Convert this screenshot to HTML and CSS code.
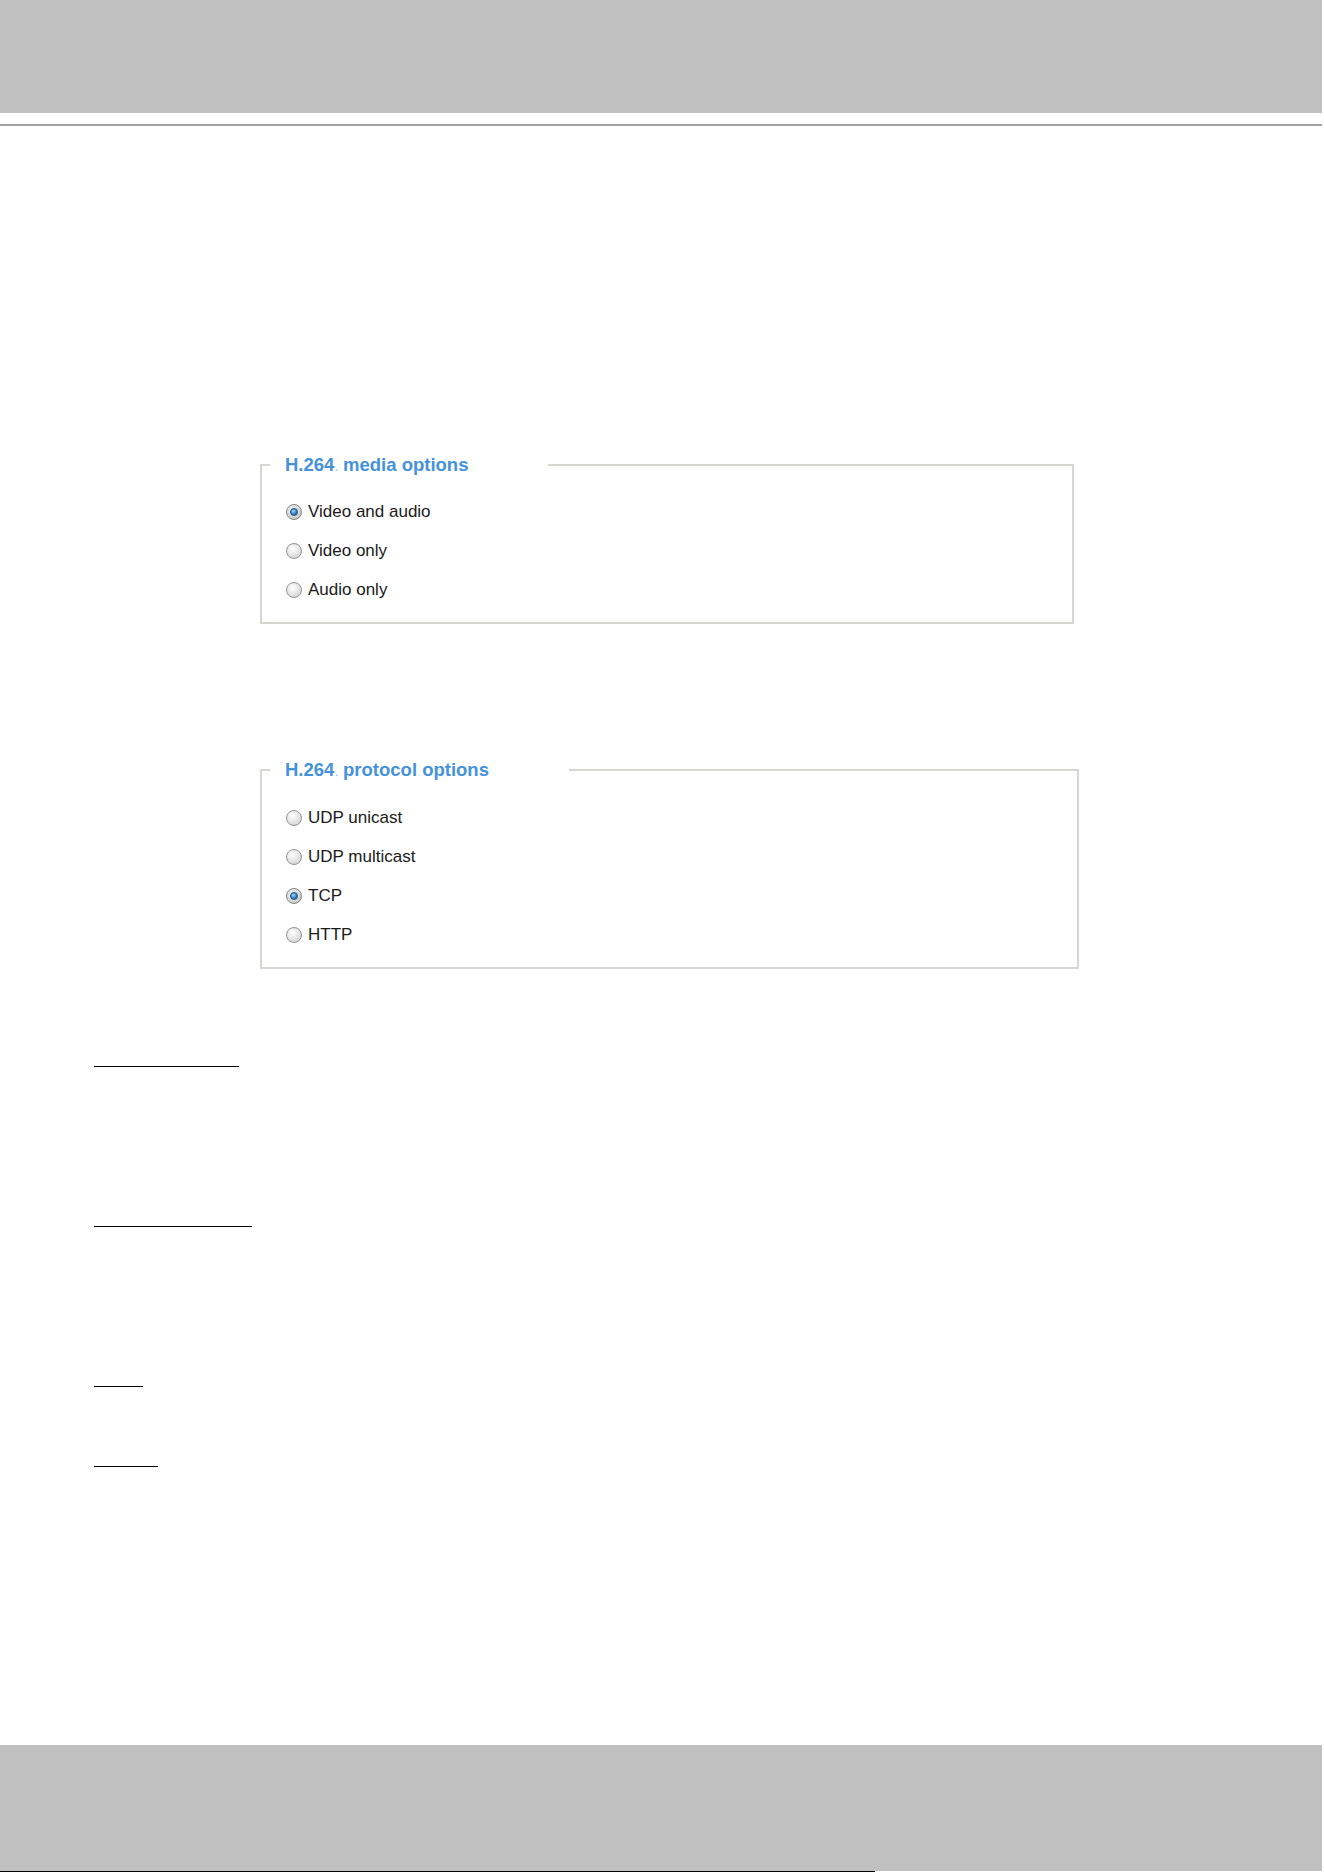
FILE: index.html
```html
<!DOCTYPE html>
<html lang="en">
<head>
<meta charset="utf-8">
<title>H.264 options</title>
<link rel="stylesheet" href="styles.css">
</head>
<body>
<div class="page">
  <header class="top-band"></header>
  <div class="top-rule"></div>

  <fieldset class="group group-media">
    <legend class="group-title">H.264<span class="tiny-dot">.</span> media options</legend>
    <div class="option"><span class="radio checked"></span><span class="label">Video and audio</span></div>
    <div class="option"><span class="radio"></span><span class="label">Video only</span></div>
    <div class="option"><span class="radio"></span><span class="label">Audio only</span></div>
  </fieldset>

  <fieldset class="group group-protocol">
    <legend class="group-title">H.264<span class="tiny-dot">.</span> protocol options</legend>
    <div class="option"><span class="radio"></span><span class="label">UDP unicast</span></div>
    <div class="option"><span class="radio"></span><span class="label">UDP multicast</span></div>
    <div class="option"><span class="radio checked"></span><span class="label">TCP</span></div>
    <div class="option"><span class="radio"></span><span class="label">HTTP</span></div>
  </fieldset>

  <section class="notes">
    <div class="rule-line w1"></div>
    <div class="rule-line w2 gap-long"></div>
    <div class="rule-line w3 gap-long"></div>
    <div class="rule-line w4 gap-short"></div>
  </section>

  <footer class="bottom-band"></footer>
  <div class="bottom-rule"></div>
</div>
</body>
</html>
```
FILE: styles.css
```css
html, body {
  margin: 0;
  padding: 0;
  background: #ffffff;
}

body {
  font-family: "Liberation Sans", Arial, sans-serif;
  color: #1e1e1e;
}

.page {
  width: 1324px;
  height: 1872px;
  overflow: hidden;
}

.top-band {
  width: 1322px;
  height: 113px;
  background: #bfc0bf;
}

.top-rule {
  width: 1322px;
  height: 2px;
  margin-top: 11px;
  background: #a2a2a2;
}

.group {
  box-sizing: border-box;
  margin: 0 0 0 260px;
  border: 2px solid #d8d6d0;
  padding: 16px 0 13px 8px;
  min-width: 0;
}

.group-media {
  width: 814px;
  margin-top: 328px;
}

.group-protocol {
  width: 819px;
  margin-top: 135px;
  padding-top: 17px;
}

.group-title {
  font-size: 18.5px;
  line-height: 22px;
  height: 22px;
  font-weight: bold;
  color: #4592dc;
  padding: 0 80px 0 15px;
  margin: 0;
  white-space: nowrap;
}

.tiny-dot {
  font-size: 9px;
  line-height: 0;
  color: #8fb3d6;
  margin-left: 1px;
}

.option {
  display: flex;
  align-items: center;
  height: 39px;
  padding-left: 16px;
  gap: 6px;
}

.label {
  font-size: 17px;
  line-height: 20px;
  color: #1a1a1a;
}

.radio {
  box-sizing: border-box;
  width: 16px;
  height: 16px;
  border-radius: 50%;
  border: 1px solid #959595;
  background: radial-gradient(circle at 40% 35%, #ffffff 0%, #e8e8e8 45%, #c8c8c8 100%);
  display: flex;
  align-items: center;
  justify-content: center;
  flex: none;
}

.radio.checked {
  border-color: #858585;
  background: radial-gradient(circle at 40% 35%, #f2f2f2 0%, #d8d8d8 55%, #b2b2b2 100%);
}

.radio.checked::after {
  content: "";
  box-sizing: border-box;
  width: 8px;
  height: 8px;
  border-radius: 50%;
  border: 1px solid #1f4e7a;
  background: radial-gradient(circle at 40% 35%, #a8dcff 0%, #3a8ad2 50%, #145592 100%);
}

.notes {
  padding-left: 94px;
  padding-top: 97px;
}

.rule-line {
  height: 1px;
  background: #000000;
}

.w1 { width: 145px; }
.w2 { width: 158px; }
.w3 { width: 49px; }
.w4 { width: 64px; }

.gap-long { margin-top: 159px; }
.gap-short { margin-top: 79px; }

.bottom-band {
  width: 1322px;
  height: 126px;
  margin-top: 278px;
  background: #bfc0bf;
}

.bottom-rule {
  width: 875px;
  height: 1px;
  background: #000000;
}
```
